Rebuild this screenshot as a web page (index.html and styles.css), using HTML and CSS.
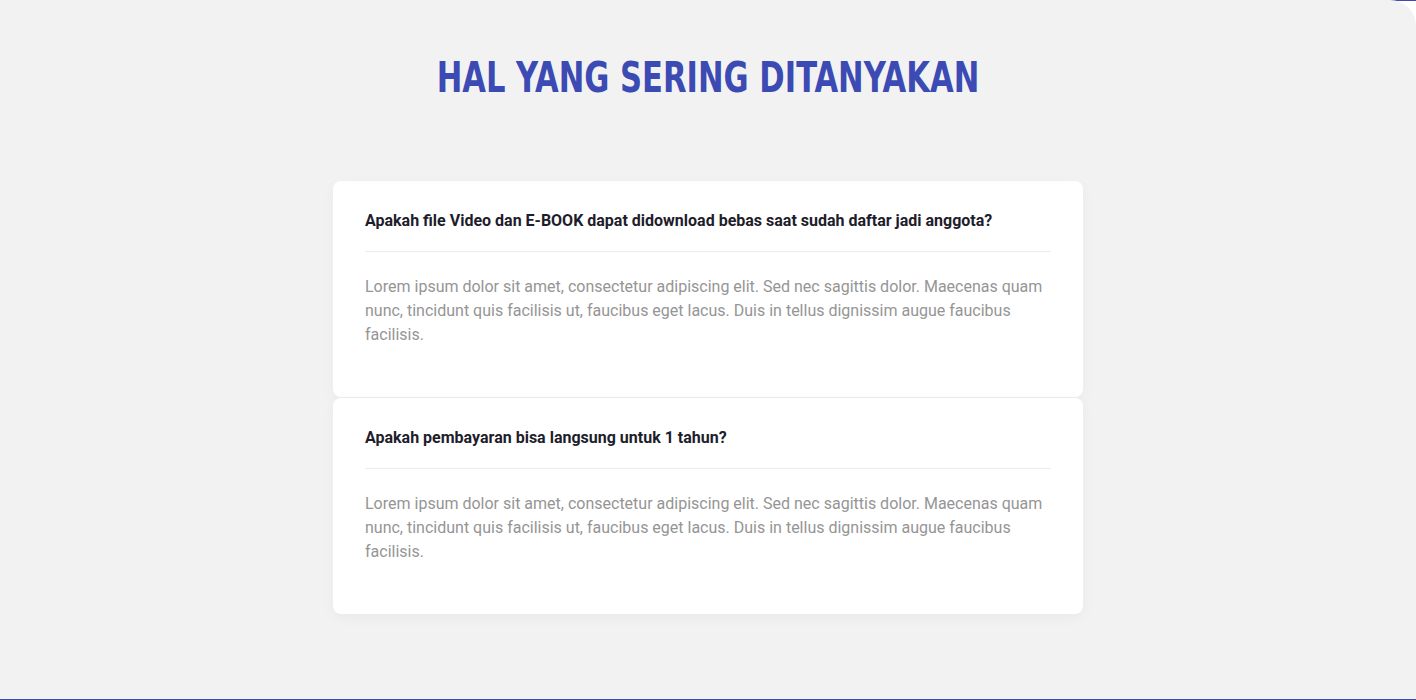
FILE: index.html
```html
<!DOCTYPE html>
<html lang="id">
<head>
<meta charset="utf-8">
<title>FAQ</title>
<link rel="stylesheet" href="styles.css">
</head>
<body>
<div class="page">
  <section class="faq">
    <h2 class="faq-title">HAL YANG SERING DITANYAKAN</h2>
    <div class="faq-list">
      <div class="faq-card">
        <h3 class="faq-q">Apakah file Video dan E-BOOK dapat didownload bebas saat sudah daftar jadi anggota?</h3>
        <p class="faq-a">Lorem ipsum dolor sit amet, consectetur adipiscing elit. Sed nec sagittis dolor. Maecenas quam nunc, tincidunt quis facilisis ut, faucibus eget lacus. Duis in tellus dignissim augue faucibus facilisis.</p>
      </div>
      <div class="faq-card">
        <h3 class="faq-q">Apakah pembayaran bisa langsung untuk 1 tahun?</h3>
        <p class="faq-a">Lorem ipsum dolor sit amet, consectetur adipiscing elit. Sed nec sagittis dolor. Maecenas quam nunc, tincidunt quis facilisis ut, faucibus eget lacus. Duis in tellus dignissim augue faucibus facilisis.</p>
      </div>
    </div>
  </section>
</div>
</body>
</html>
```
FILE: styles.css
```css
html, body {
  margin: 0;
  padding: 0;
}
body {
  font-family: Roboto, "Liberation Sans", sans-serif;
  background: #fff;
}
.page {
  background: linear-gradient(#3c4ab1 1px, #ffffff 1px);
}
.faq {
  background: #f2f2f2;
  border-top-right-radius: 26px;
  border-bottom: 1px solid #3c4ab1;
  height: 699px;
  box-sizing: content-box;
  padding: 0;
  display: flex;
  flex-direction: column;
  align-items: center;
}
.faq-title {
  margin: 53px 0 0;
  font-family: "DejaVu Sans Condensed", "DejaVu Sans", sans-serif;
  font-weight: 700;
  font-size: 42px;
  line-height: 50px;
  color: #3c4ab4;
  letter-spacing: 0;
  transform: scaleX(0.81);
}
.faq-list {
  margin-top: 78px;
  width: 750px;
  display: flex;
  flex-direction: column;
}
.faq-card {
  background: #fff;
  border-radius: 8px;
  box-shadow: 0 4px 14px rgba(0, 0, 0, 0.04);
  padding: 28px 32px 50px;
  height: 216px;
  box-sizing: border-box;
}
.faq-card + .faq-card {
  margin-top: 1px;
}
.faq-q {
  margin: 0;
  font-size: 16px;
  line-height: 24px;
  font-weight: 700;
  color: #1e1d2b;
  padding-bottom: 18px;
  border-bottom: 1px solid #ececec;
}
.faq-a {
  margin: 23px 0 0;
  font-size: 16px;
  line-height: 24px;
  color: #959595;
}
```
